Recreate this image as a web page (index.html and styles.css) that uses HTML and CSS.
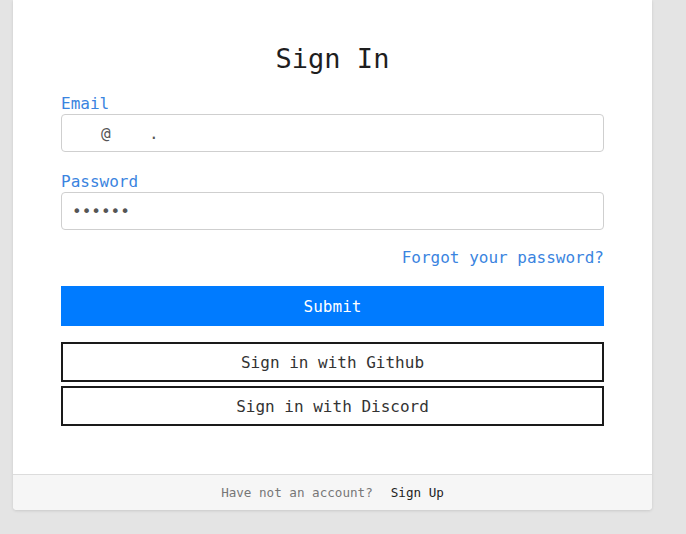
FILE: index.html
```html
<!DOCTYPE html>
<html lang="en">
<head>
<meta charset="utf-8">
<title>Sign In</title>
<link rel="stylesheet" href="styles.css">
</head>
<body>
<div class="page">
  <div class="card">
    <div class="card-body">
      <h1 class="title">Sign In</h1>
      <div class="field">
        <label class="label" for="email">Email</label>
        <input class="input" id="email" type="text" value="   @    .">
      </div>
      <div class="field field-last">
        <label class="label" for="password">Password</label>
        <input class="input" id="password" type="password" value="123456">
      </div>
      <div class="forgot-row"><a class="forgot" href="#">Forgot your password?</a></div>
      <button class="btn btn-primary" type="button">Submit</button>
      <div class="social">
        <button class="btn btn-outline" type="button">Sign in with Github</button>
        <button class="btn btn-outline" type="button">Sign in with Discord</button>
      </div>
    </div>
    <div class="card-footer">
      <span class="muted">Have not an account?</span><a class="signup" href="#">Sign Up</a>
    </div>
  </div>
</div>
</body>
</html>
```
FILE: styles.css
```css
* { box-sizing: border-box; }
html, body { margin: 0; padding: 0; }
body {
  background: #e4e4e4;
  font-family: "DejaVu Sans Mono", "Liberation Mono", monospace;
  color: #222;
  height: 534px;
  overflow: hidden;
}
.page {
  padding-left: 13px;
}
.card {
  width: 639px;
  background: #fff;
  border-radius: 0 0 4px 4px;
  box-shadow: 0 1px 3px rgba(0,0,0,0.12);
  overflow: hidden;
}
.card-body {
  padding: 43px 48px 48px;
  display: flex;
  flex-direction: column;
}
.title {
  margin: 0 0 19px;
  font-size: 27px;
  line-height: 32px;
  font-weight: normal;
  text-align: center;
  color: #1e1e1e;
}
.field {
  display: flex;
  flex-direction: column;
  margin-bottom: 20px;
}
.field-last { margin-bottom: 0; }
.label {
  font-size: 16px;
  line-height: 20px;
  color: #3a84e0;
}
.input {
  height: 38px;
  border: 1px solid #cfcfcf;
  border-radius: 4px;
  padding: 0 10px;
  font-family: "DejaVu Sans Mono", "Liberation Mono", monospace;
  font-size: 16px;
  color: #555;
  outline: none;
}
.forgot-row {
  margin: 18px 0;
  line-height: 20px;
  text-align: right;
}
.forgot {
  font-size: 16px;
  color: #3a84e0;
  text-decoration: none;
}
.btn {
  height: 40px;
  font-family: "DejaVu Sans Mono", "Liberation Mono", monospace;
  font-size: 16px;
  border-radius: 0;
  cursor: pointer;
}
.btn-primary {
  background: #007bff;
  color: #fff;
  border: none;
}
.social {
  margin-top: 16px;
  display: flex;
  flex-direction: column;
  gap: 4px;
}
.btn-outline {
  background: #fff;
  color: #333;
  border: 2px solid #1a1a1a;
}
.card-footer {
  border-top: 1px solid #dcdcdc;
  background: #f6f6f6;
  height: 36px;
  display: flex;
  justify-content: center;
  align-items: center;
  gap: 18px;
  font-size: 12.6px;
}
.muted { color: #777; }
.signup { color: #222; text-decoration: none; }
```
